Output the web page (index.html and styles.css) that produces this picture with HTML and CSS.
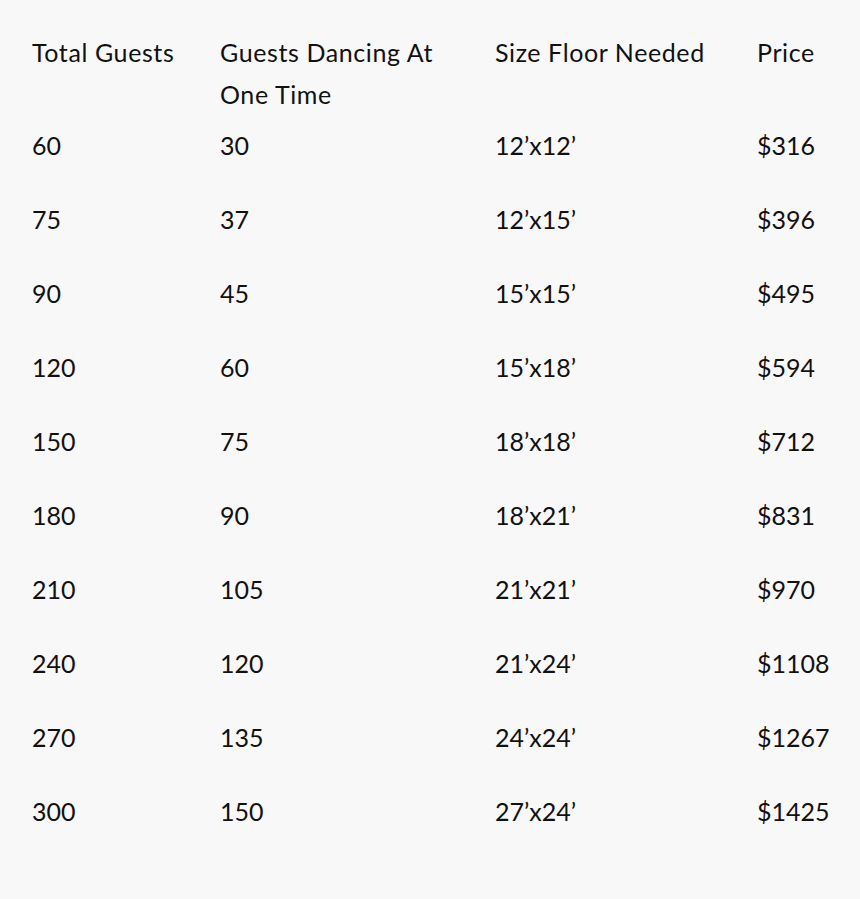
FILE: index.html
```html
<!DOCTYPE html>
<html>
<head>
<meta charset="utf-8">
<link rel="stylesheet" href="styles.css">
</head>
<body>
<div class="table">
  <div class="row head">
    <div class="cell">Total Guests</div>
    <div class="cell wrap">Guests Dancing At One Time</div>
    <div class="cell">Size Floor Needed</div>
    <div class="cell">Price</div>
  </div>
  <div class="row"><div class="cell">60</div><div class="cell">30</div><div class="cell">12’x12’</div><div class="cell">$316</div></div>
  <div class="row"><div class="cell">75</div><div class="cell">37</div><div class="cell">12’x15’</div><div class="cell">$396</div></div>
  <div class="row"><div class="cell">90</div><div class="cell">45</div><div class="cell">15’x15’</div><div class="cell">$495</div></div>
  <div class="row"><div class="cell">120</div><div class="cell">60</div><div class="cell">15’x18’</div><div class="cell">$594</div></div>
  <div class="row"><div class="cell">150</div><div class="cell">75</div><div class="cell">18’x18’</div><div class="cell">$712</div></div>
  <div class="row"><div class="cell">180</div><div class="cell">90</div><div class="cell">18’x21’</div><div class="cell">$831</div></div>
  <div class="row"><div class="cell">210</div><div class="cell">105</div><div class="cell">21’x21’</div><div class="cell">$970</div></div>
  <div class="row"><div class="cell">240</div><div class="cell">120</div><div class="cell">21’x24’</div><div class="cell">$1108</div></div>
  <div class="row"><div class="cell">270</div><div class="cell">135</div><div class="cell">24’x24’</div><div class="cell">$1267</div></div>
  <div class="row"><div class="cell">300</div><div class="cell">150</div><div class="cell">27’x24’</div><div class="cell">$1425</div></div>
</div>
</body>
</html>
```

FILE: styles.css
```css
html, body {
  margin: 0;
  padding: 0;
  background: #f8f8f8;
}
body {
  width: 860px;
  height: 899px;
  overflow: hidden;
  font-family: "Lato", "Liberation Sans", sans-serif;
  font-size: 25px;
  color: #111111;
}
.table {
  padding: 31px 0 0 32px;
}
.row {
  display: grid;
  grid-template-columns: 188px 275px 262px 1fr;
  line-height: 42px;
  padding: 9px 0 23px;
}
.row.head {
  padding: 0;
  letter-spacing: 0.6px;
}
.wrap {
  max-width: 240px;
}
```
